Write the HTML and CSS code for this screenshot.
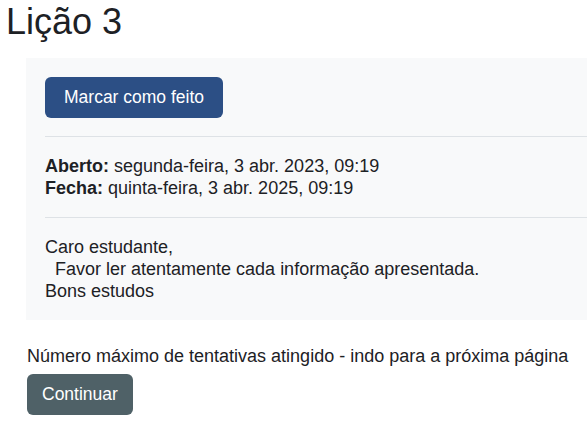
FILE: index.html
```html
<!DOCTYPE html>
<html lang="pt">
<head>
<meta charset="utf-8">
<link rel="stylesheet" href="styles.css">
</head>
<body>
<h1 class="title">Lição 3</h1>
<div class="panel">
  <div class="panel-top">
    <button class="btn btn-primary">Marcar como feito</button>
  </div>
  <div class="panel-section">
    <div><strong>Aberto:</strong> segunda-feira, 3 abr. 2023, 09:19</div>
    <div><strong>Fecha:</strong> quinta-feira, 3 abr. 2025, 09:19</div>
  </div>
  <div class="panel-section panel-last">
    <div>Caro estudante,</div>
    <div>&nbsp;&nbsp;Favor ler atentamente cada informação apresentada.</div>
    <div>Bons estudos</div>
  </div>
</div>
<div class="after">
  <div>Número máximo de tentativas atingido - indo para a próxima página</div>
  <button class="btn btn-secondary">Continuar</button>
</div>
</body>
</html>
```
FILE: styles.css
```css
html, body {
  margin: 0;
  padding: 0;
  background: #ffffff;
}
body {
  font-family: "Liberation Sans", Arial, sans-serif;
  font-size: 18px;
  line-height: 22px;
  color: #1d2125;
  overflow: hidden;
}
.title {
  font-size: 36px;
  font-weight: normal;
  line-height: normal;
  margin: 0;
  padding: 1px 0 0 6px;
  color: #1d2125;
}
.panel {
  margin: 15px 0 0 26px;
  background: #f8f9fa;
  padding: 0 0 0 19px;
}
.panel-top {
  padding: 19px 0 18px;
  border-bottom: 1px solid #dee2e6;
}
.panel-section {
  padding: 18px 0 18px;
  border-bottom: 1px solid #dee2e6;
}
.panel-last {
  border-bottom: none;
  padding-bottom: 18px;
}
.btn {
  font-family: inherit;
  font-size: 17.5px;
  line-height: 23px;
  color: #ffffff;
  border: none;
  border-radius: 6px;
  padding: 9px 19px;
  cursor: pointer;
  display: block;
}
.btn-primary {
  background: #2c4f85;
}
.btn-secondary {
  background: #4f6167;
  padding: 9px 15px;
  margin-top: 7px;
}
.after {
  margin: 25px 0 0 27px;
}
```
